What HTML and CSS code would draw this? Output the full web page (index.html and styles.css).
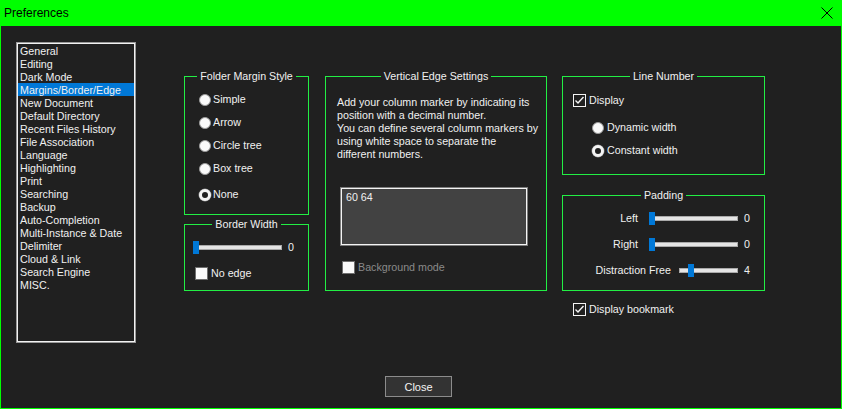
FILE: index.html
```html
<!DOCTYPE html>
<html>
<head>
<meta charset="utf-8">
<link rel="stylesheet" href="styles.css">
</head>
<body>
<div class="window">
  <div class="titlebar">
    <span class="title">Preferences</span>
    <svg class="close-x" width="12" height="12" viewBox="0 0 12 12"><path d="M0.5 0.5 L11.5 11.5 M11.5 0.5 L0.5 11.5" stroke="#000" stroke-width="1" fill="none"/></svg>
  </div>
  <div class="content">
    <div class="list">
      <div class="item">General</div>
      <div class="item">Editing</div>
      <div class="item">Dark Mode</div>
      <div class="item selected">Margins/Border/Edge</div>
      <div class="item">New Document</div>
      <div class="item">Default Directory</div>
      <div class="item">Recent Files History</div>
      <div class="item">File Association</div>
      <div class="item">Language</div>
      <div class="item">Highlighting</div>
      <div class="item">Print</div>
      <div class="item">Searching</div>
      <div class="item">Backup</div>
      <div class="item">Auto-Completion</div>
      <div class="item">Multi-Instance &amp; Date</div>
      <div class="item">Delimiter</div>
      <div class="item">Cloud &amp; Link</div>
      <div class="item">Search Engine</div>
      <div class="item">MISC.</div>
    </div>

    <div class="col col1">
      <div class="group folder">
        <div class="group-title">Folder Margin Style</div>
        <div class="radios">
          <div class="row radio-row"><span class="radio"></span><span>Simple</span></div>
          <div class="row radio-row"><span class="radio"></span><span>Arrow</span></div>
          <div class="row radio-row"><span class="radio"></span><span>Circle tree</span></div>
          <div class="row radio-row"><span class="radio"></span><span>Box tree</span></div>
          <div class="row radio-row last"><span class="radio on"></span><span>None</span></div>
        </div>
      </div>
      <div class="group border-width">
        <div class="group-title">Border Width</div>
        <div class="row bw-slider">
          <div class="slider w90"><span class="thumb" style="margin-left:0px"></span></div>
          <span class="bw-value">0</span>
        </div>
        <div class="row check-row noedge"><span class="check"></span><span>No edge</span></div>
      </div>
    </div>

    <div class="col col2">
      <div class="group vedge">
        <div class="group-title">Vertical Edge Settings</div>
        <p class="desc">Add your column marker by indicating its<br>position with a decimal number.<br>You can define several column markers by<br>using white space to separate the<br>different numbers.</p>
        <div class="textbox">60 64</div>
        <div class="row check-row bgmode"><span class="check"></span><span class="disabled">Background mode</span></div>
      </div>
    </div>

    <div class="col col3">
      <div class="group linenum">
        <div class="group-title">Line Number</div>
        <div class="row check-row display"><span class="check on"><svg width="11" height="11" viewBox="0 0 11 11"><path d="M1.5 5.5 L4 8 L9.5 2" stroke="#f4f4f4" stroke-width="1.4" fill="none"/></svg></span><span>Display</span></div>
        <div class="row radio-row ln-radio first"><span class="radio"></span><span>Dynamic width</span></div>
        <div class="row radio-row ln-radio second"><span class="radio on"></span><span>Constant width</span></div>
      </div>
      <div class="group padding">
        <div class="group-title">Padding</div>
        <div class="row pad-row first">
          <span class="pad-label">Left</span>
          <div class="slider w90 gap11"><span class="thumb" style="margin-left:0px"></span></div>
          <span class="pad-value">0</span>
        </div>
        <div class="row pad-row">
          <span class="pad-label">Right</span>
          <div class="slider w90 gap11"><span class="thumb" style="margin-left:0px"></span></div>
          <span class="pad-value">0</span>
        </div>
        <div class="row pad-row">
          <span class="pad-label">Distraction Free</span>
          <div class="slider w60 gap8"><span class="thumb" style="margin-left:9px"></span></div>
          <span class="pad-value">4</span>
        </div>
      </div>
      <div class="row check-row bookmark"><span class="check on"><svg width="11" height="11" viewBox="0 0 11 11"><path d="M1.5 5.5 L4 8 L9.5 2" stroke="#f4f4f4" stroke-width="1.4" fill="none"/></svg></span><span>Display bookmark</span></div>
    </div>
  </div>
  <div class="footer">
    <div class="button">Close</div>
  </div>
</div>
</body>
</html>
```
FILE: styles.css
```css
html, body {
  margin: 0;
  padding: 0;
  background: #202020;
}
body {
  font-family: "Liberation Sans", Arial, sans-serif;
  font-size: 10.7px;
  color: #f0f0f0;
}
.window {
  width: 842px;
  height: 409px;
  box-sizing: border-box;
  border: 1px solid #00ff00;
  border-top: none;
  background: #202020;
  display: flex;
  flex-direction: column;
}
.titlebar {
  flex: none;
  height: 26px;
  background: #00ff00;
  display: flex;
  align-items: center;
  justify-content: space-between;
  padding: 0 8px 0 3px;
  color: #000;
  font-size: 12px;
}
.close-x { display: block; }
.content {
  display: flex;
  align-items: flex-start;
  padding: 16px 0 0 15px;
}
.list {
  flex: none;
  width: 120px;
  height: 301px;
  box-sizing: border-box;
  border: 1px solid #9a9a9a;
  box-shadow: inset 0 0 0 1px #f2f2f2;
  padding: 1px;
}
.item {
  height: 13px;
  line-height: 14px;
  padding-left: 2px;
  white-space: nowrap;
}
.item.selected { background: #0078d7; }

.col { flex: none; margin-top: 34px; }
.col1 { width: 125px; margin-left: 48px; }
.col2 { width: 222px; margin-left: 16px; }
.col3 { width: 203px; margin-left: 15px; }

.group {
  border: 1px solid #22ee44;
  box-sizing: border-box;
}
.group-title {
  width: fit-content;
  margin: -7px auto 0;
  padding: 0 3px;
  background: #202020;
  line-height: 13px;
  height: 13px;
  white-space: nowrap;
}
.row {
  display: flex;
  align-items: center;
  height: 13px;
  line-height: 13px;
  white-space: nowrap;
}

/* radios */
.radio {
  flex: none;
  width: 12px;
  height: 12px;
  box-sizing: border-box;
  border-radius: 50%;
  background: #fafafa;
  border: 1px solid #9a9a9a;
  margin-right: 2px;
}
.radio.on {
  background: #202020;
  border: 3px solid #f4f4f4;
  box-shadow: 0 0 0 0.5px #888;
}
.folder { height: 139px; }
.radios { padding-top: 5px; }
.radio-row { height: 23px; padding-left: 14px; }
.radio-row.last { margin-top: 3px; }

/* checkbox */
.check {
  flex: none;
  width: 13px;
  height: 13px;
  box-sizing: border-box;
  background: #fafafa;
  border: 1px solid #6e6e6e;
  margin-right: 3px;
  display: flex;
  align-items: center;
  justify-content: center;
}
.check.on {
  background: #202020;
  border: 1px solid #f4f4f4;
}
.check svg { display: block; }
.disabled { color: #8a8a8a; }

/* sliders */
.slider {
  flex: none;
  height: 13px;
  display: flex;
  align-items: center;
  background-image: linear-gradient(#e4e4e4, #e4e4e4), linear-gradient(#a9a9a9, #a9a9a9);
  background-repeat: no-repeat;
  background-position: center, center;
  background-size: calc(100% - 2px) 3px, 100% 5px;
}
.w90 { width: 89px; }
.w60 { width: 59px; }
.gap11 { margin-left: 11px; }
.gap8 { margin-left: 8px; }
.thumb {
  display: block;
  width: 6px;
  height: 13px;
  background: #0078d7;
}

.border-width { height: 67px; margin-top: 9px; }
.bw-slider { margin-top: 10px; padding-left: 8px; }
.bw-value { margin-left: 6px; }
.noedge { margin-top: 13px; padding-left: 10px; }

/* vertical edge */
.vedge { height: 215px; }
.desc {
  margin: 13px 0 0 11px;
  line-height: 13px;
  white-space: nowrap;
}
.textbox {
  width: 188px;
  height: 59px;
  box-sizing: border-box;
  margin: 26px 0 0 14px;
  border: 1px solid #7c7c7c;
  box-shadow: inset 0 0 0 1px #f4f4f4;
  background: #424242;
  padding: 3px 5px;
  line-height: 13px;
}
.bgmode { margin-top: 15px; padding-left: 16px; }

/* line number */
.linenum { height: 99px; }
.display { margin-top: 11px; padding-left: 10px; }
.ln-radio { height: 13px; padding-left: 29px; }
.ln-radio .radio { margin-right: 3px; }
.ln-radio.first { margin-top: 14px; }
.ln-radio.second { margin-top: 10px; }

/* padding */
.padding { height: 96px; margin-top: 20px; }
.pad-row { margin-top: 13px; }
.pad-row.first { margin-top: 10px; }
.pad-label { flex: 1; text-align: right; }
.pad-value { flex: none; width: 26px; box-sizing: border-box; padding-left: 6px; }
.bookmark { margin-top: 12px; padding-left: 11px; }

/* footer */
.footer {
  display: flex;
  padding: 33px 0 0 384px;
}
.button {
  width: 67px;
  height: 21px;
  box-sizing: border-box;
  border: 1px solid #8c8c8c;
  background: #333333;
  color: #f4f4f4;
  display: flex;
  align-items: center;
  justify-content: center;
  font-size: 11px;
}
```
